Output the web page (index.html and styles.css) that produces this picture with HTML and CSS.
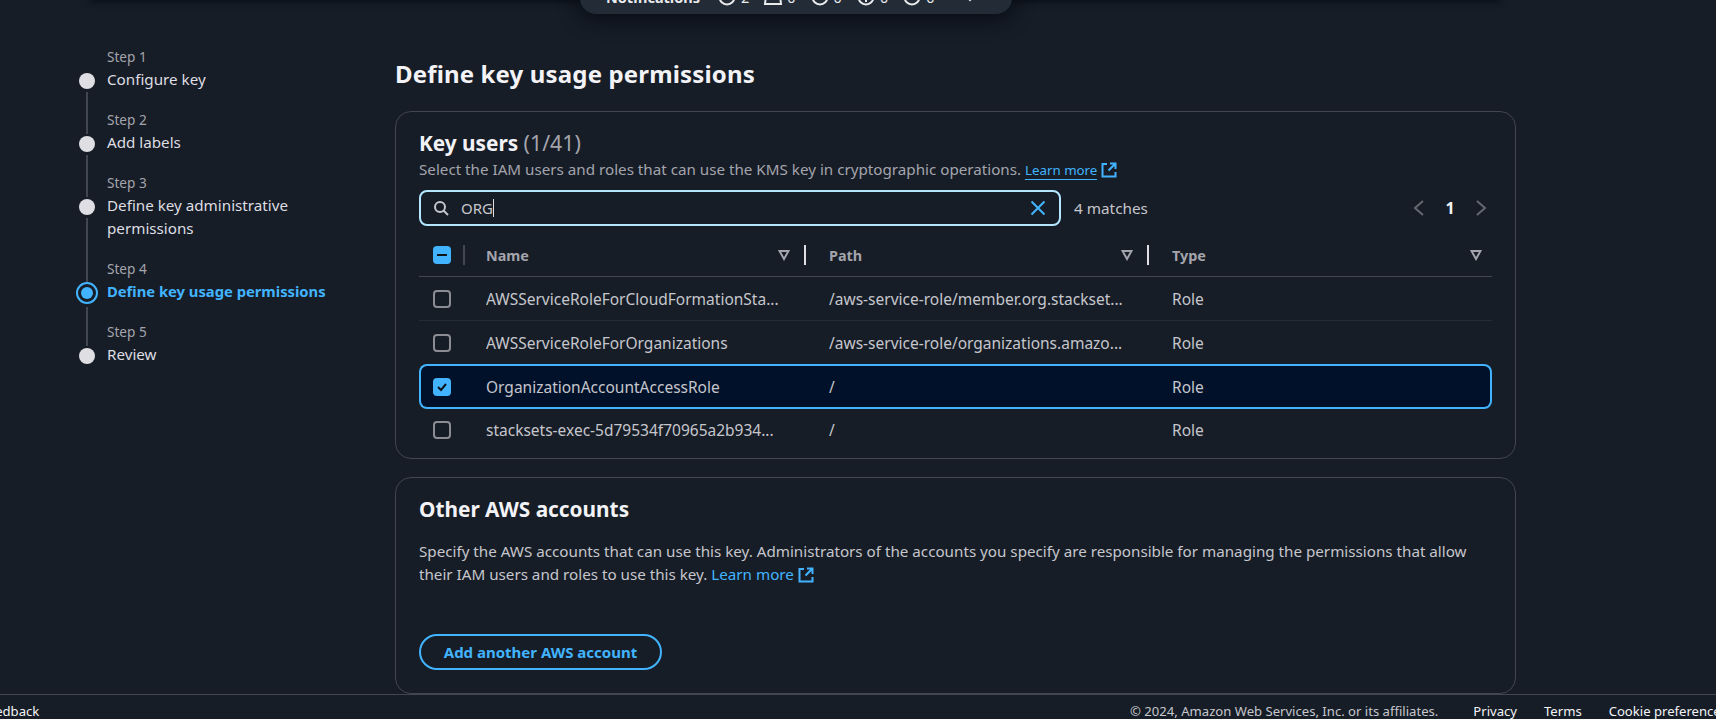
FILE: index.html
```html
<!DOCTYPE html>
<html lang="en">
<head>
    <meta charset="UTF-8">
    <title>Define key usage permissions</title>
    <link rel="stylesheet" href="styles.css">
</head>
<body>

    <!-- Shadow of the console header, scrolled off the top -->
    <div class="top-shadow"></div>

    <!-- Flash bar notifications, mostly cut off -->
    <div class="notify">
        <span class="notify-title">Notifications</span>
        <span class="notify-item"><svg width="20" height="20" viewBox="0 0 20 20"><circle cx="10" cy="10" r="7.5" fill="none" stroke="#e9ebed" stroke-width="2"/></svg>2</span>
        <span class="notify-item"><svg width="20" height="20" viewBox="0 0 20 20"><path d="M4 0 2 17H18L16 0" fill="none" stroke="#e9ebed" stroke-width="2"/></svg>0</span>
        <span class="notify-item"><svg width="20" height="20" viewBox="0 0 20 20"><circle cx="10" cy="10" r="7.5" fill="none" stroke="#e9ebed" stroke-width="2"/></svg>0</span>
        <span class="notify-item"><svg width="20" height="20" viewBox="0 0 20 20"><circle cx="10" cy="10" r="7.5" fill="none" stroke="#e9ebed" stroke-width="2"/><path d="M10 9v6" stroke="#e9ebed" stroke-width="2"/></svg>0</span>
        <span class="notify-item"><svg width="20" height="20" viewBox="0 0 20 20"><circle cx="10" cy="10" r="7.5" fill="none" stroke="#e9ebed" stroke-width="2"/></svg>0</span>
        <svg class="notify-caret" width="16" height="16" viewBox="0 0 16 16"><path d="M2 5l6 6 6-6" fill="none" stroke="#e9ebed" stroke-width="2"/></svg>
    </div>

    <div class="page">

        <!-- Wizard steps -->
        <ul class="steps">
            <li class="step">
                <span class="step-num">Step 1</span>
                <span class="step-name">Configure key</span>
            </li>
            <li class="step">
                <span class="step-num">Step 2</span>
                <span class="step-name">Add labels</span>
            </li>
            <li class="step">
                <span class="step-num">Step 3</span>
                <span class="step-name">Define key administrative permissions</span>
            </li>
            <li class="step step-active">
                <span class="step-num">Step 4</span>
                <span class="step-name">Define key usage permissions</span>
            </li>
            <li class="step">
                <span class="step-num">Step 5</span>
                <span class="step-name">Review</span>
            </li>
        </ul>

        <!-- Main content -->
        <main class="content">
            <h1>Define key usage permissions</h1>

            <section class="card card-users">
                <h2>Key users <span class="count">(1/41)</span></h2>
                <p class="card-desc">Select the IAM users and roles that can use the KMS key in cryptographic operations. <a href="#" class="learn learn-line">Learn more</a>
                    <svg class="ext" width="16" height="16" viewBox="0 0 16 16"><path d="M6 2H1.5v12.5h13V10M9 1.5h5.5V7M14 2 7.5 8.5" fill="none" stroke="#42b4ff" stroke-width="2"/></svg>
                </p>

                <div class="filter-row">
                    <div class="search">
                        <svg width="16" height="16" viewBox="0 0 16 16"><circle cx="7" cy="7" r="5" fill="none" stroke="#c6c6cd" stroke-width="2"/><path d="M10.5 10.5 15 15" stroke="#c6c6cd" stroke-width="2"/></svg>
                        <span class="search-text">ORG</span><span class="caret"></span>
                        <svg class="search-clear" width="16" height="16" viewBox="0 0 16 16"><path d="M1.5 1.5l13 13M14.5 1.5l-13 13" stroke="#42b4ff" stroke-width="2"/></svg>
                    </div>
                    <span class="matches">4 matches</span>
                    <div class="pager">
                        <svg width="16" height="16" viewBox="0 0 16 16"><path d="M12 1 4 8l8 7" fill="none" stroke="#656871" stroke-width="2"/></svg>
                        <span class="page-no">1</span>
                        <svg width="16" height="16" viewBox="0 0 16 16"><path d="m4 1 8 7-8 7" fill="none" stroke="#656871" stroke-width="2"/></svg>
                    </div>
                </div>

                <table class="users">
                    <thead>
                        <tr>
                            <th class="col-check">
                                <div class="th-in"><span class="box box-on"><i class="minus"></i></span><span class="th-line th-line-dim"></span></div>
                            </th>
                            <th class="col-name">
                                <div class="th-in">Name<svg class="sort" width="12" height="12" viewBox="0 0 12 12"><path d="M1.5 2h9L6 10Z" fill="none" stroke="#a4a4ad" stroke-width="2"/></svg><span class="th-line"></span></div>
                            </th>
                            <th class="col-path">
                                <div class="th-in">Path<svg class="sort" width="12" height="12" viewBox="0 0 12 12"><path d="M1.5 2h9L6 10Z" fill="none" stroke="#a4a4ad" stroke-width="2"/></svg><span class="th-line"></span></div>
                            </th>
                            <th class="col-type">
                                <div class="th-in">Type<svg class="sort" width="12" height="12" viewBox="0 0 12 12"><path d="M1.5 2h9L6 10Z" fill="none" stroke="#a4a4ad" stroke-width="2"/></svg></div>
                            </th>
                        </tr>
                    </thead>
                    <tbody>
                        <tr>
                            <td class="col-check"><span class="box"></span></td>
                            <td>AWSServiceRoleForCloudFormationSta...</td>
                            <td>/aws-service-role/member.org.stackset...</td>
                            <td>Role</td>
                        </tr>
                        <tr>
                            <td class="col-check"><span class="box"></span></td>
                            <td>AWSServiceRoleForOrganizations</td>
                            <td>/aws-service-role/organizations.amazo...</td>
                            <td>Role</td>
                        </tr>
                        <tr class="selected">
                            <td class="col-check"><span class="box box-on"><svg width="14" height="14" viewBox="0 0 14 14"><path d="m3 7 3 3 5-6" fill="none" stroke="#0f141a" stroke-width="2"/></svg></span></td>
                            <td>OrganizationAccountAccessRole</td>
                            <td>/</td>
                            <td>Role</td>
                        </tr>
                        <tr>
                            <td class="col-check"><span class="box"></span></td>
                            <td>stacksets-exec-5d79534f70965a2b934...</td>
                            <td>/</td>
                            <td>Role</td>
                        </tr>
                    </tbody>
                </table>
            </section>

            <section class="card card-other">
                <h2>Other AWS accounts</h2>
                <p class="other-desc">Specify the AWS accounts that can use this key. Administrators of the accounts you specify are responsible for managing the permissions that allow their IAM users and roles to use this key. <a href="#" class="learn">Learn more</a>
                    <svg class="ext" width="16" height="16" viewBox="0 0 16 16"><path d="M6 2H1.5v12.5h13V10M9 1.5h5.5V7M14 2 7.5 8.5" fill="none" stroke="#42b4ff" stroke-width="2"/></svg>
                </p>
                <button class="add-btn">Add another AWS account</button>
            </section>
        </main>
    </div>

    <!-- Footer -->
    <footer>
        <span class="feedback">Feedback</span>
        <span class="copy">© 2024, Amazon Web Services, Inc. or its affiliates.</span>
        <a href="#">Privacy</a>
        <a href="#">Terms</a>
        <a href="#">Cookie preferences</a>
    </footer>

</body>
</html>
```

FILE: styles.css
```css
/* General Body Style */
html, body {
    height: 100%;
}

body {
    margin: 0;
    position: relative;
    display: flex;
    flex-direction: column;
    height: 719px;
    overflow: hidden;
    background-color: #161d26;
    color: #dedee3;
    font-family: "Noto Sans", "Open Sans", sans-serif;
    font-size: 15px;
}

/* Top shadow and notification bar */
.top-shadow {
    position: absolute;
    top: -10px;
    left: 90px;
    width: 1410px;
    height: 10px;
    box-shadow: 0 2px 6px #0a0f18;
}

.notify {
    position: absolute;
    top: -16px;
    left: 580px;
    width: 432px;
    height: 30px;
    box-sizing: border-box;
    padding: 0 28px 4px 26px;
    display: flex;
    align-items: center;
    background-color: #232b37;
    border-radius: 0 0 16px 16px;
    box-shadow: 0 4px 20px #070b14;
    color: #e9ebed;
    font-size: 14.5px;
    font-weight: 700;
}

.notify-title {
    margin-right: 17px;
}

.notify-item {
    display: flex;
    align-items: center;
    gap: 4px;
    margin-right: 14px;
    font-weight: 400;
}

.notify-caret {
    margin-left: 14px;
}

/* Page layout */
.page {
    flex: 1;
    min-height: 0;
    display: flex;
    padding-left: 78.5px;
}

/* Wizard steps */
.steps {
    list-style: none;
    margin: 0;
    padding: 47px 0 0;
    width: 316.5px;
    flex-shrink: 0;
}

.step {
    position: relative;
    padding: 0 0 0 28.5px;
    margin-bottom: 19px;
    width: 220px;
}

.step::before {
    content: "";
    position: absolute;
    left: 0;
    top: 26px;
    width: 16px;
    height: 16px;
    border-radius: 50%;
    background-color: #dedee3;
}

.step::after {
    content: "";
    position: absolute;
    left: 7.5px;
    top: 45px;
    bottom: -43px;
    width: 2px;
    background-color: #424650;
}

.step:last-child::after {
    display: none;
}

.step-num {
    display: block;
    margin-bottom: 1px;
    color: #a4a4ad;
    font-size: 13.6px;
    line-height: 20px;
}

.step-name {
    display: block;
    color: #dedee3;
    font-size: 15.2px;
    line-height: 23px;
}

.step-active .step-name {
    color: #42b4ff;
    font-size: 14.75px;
    font-weight: 700;
    white-space: nowrap;
}

.step-active::before {
    left: -3px;
    top: 23px;
    width: 12px;
    height: 12px;
    border: 2px solid #42b4ff;
    background-color: #42b4ff;
    background-clip: content-box;
    padding: 3px;
}

.step-active::after {
    top: 48px;
}

/* Main content */
.content {
    width: 1121px;
}

h1 {
    margin: 0;
    padding-top: 57px;
    height: 54px;
    box-sizing: content-box;
    color: #f3f3f7;
    font-size: 24px;
    line-height: 34px;
    font-weight: 700;
    letter-spacing: 0.15px;
}

.card {
    box-sizing: border-box;
    padding: 0 23px;
    background-color: #161d26;
    border: 1px solid #424650;
    border-radius: 16px;
}

.card h2 {
    margin: 0;
    color: #f3f3f7;
    font-size: 20.8px;
    line-height: 28px;
    font-weight: 700;
}

.card-users {
    height: 348px;
    padding-top: 17px;
    margin-bottom: 18px;
}

.count {
    color: #a4a4ad;
    font-size: 21.3px;
    font-weight: 400;
}

.card-desc {
    margin: 2px 0 0;
    color: #a4a4ad;
    font-size: 15.2px;
    line-height: 21px;
    white-space: nowrap;
}

.learn {
    color: #42b4ff;
    text-decoration: none;
}

.learn-line {
    font-size: 13.3px;
    border-bottom: 1px solid #42b4ff;
}

.ext {
    vertical-align: -3px;
}

/* Search row */
.filter-row {
    display: flex;
    align-items: center;
    margin-top: 9px;
    height: 36px;
}

.search {
    box-sizing: border-box;
    width: 642px;
    height: 36px;
    display: flex;
    align-items: center;
    padding: 0 13px 0 12px;
    border: 2px solid #b3e7ff;
    border-radius: 8px;
}

.search-text {
    margin-left: 12px;
    color: #c6c6cd;
}

.caret {
    width: 1px;
    height: 18px;
    background-color: #dedee3;
}

.search-clear {
    margin-left: auto;
}

.matches {
    margin-left: 13px;
    color: #c6c6cd;
    font-size: 15.3px;
}

.pager {
    margin-left: auto;
    margin-right: 3px;
    display: flex;
    align-items: center;
    gap: 16px;
}

.page-no {
    width: 14px;
    text-align: center;
    color: #f3f3f7;
    font-size: 16px;
    font-weight: 700;
}

/* Table */
.users {
    width: 1073px;
    margin-top: 8px;
    border-collapse: separate;
    border-spacing: 0;
    table-layout: fixed;
    font-size: 15.5px;
}

.users th {
    height: 42px;
    padding: 0;
    text-align: left;
    color: #a4a4ad;
    font-size: 14.4px;
    font-weight: 700;
    border-bottom: 1px solid #424650;
}

.col-check { width: 67px; }
.col-name { width: 343px; }
.col-path { width: 343px; }

.th-in {
    display: flex;
    align-items: center;
    height: 100%;
}

.col-check .th-in {
    padding-left: 14px;
}

.sort {
    margin-left: auto;
}

.col-name .sort,
.col-path .sort {
    margin-right: 14px;
}

.col-type .sort {
    margin-right: 10px;
}

.th-line {
    width: 2px;
    height: 20px;
    background-color: #dedee3;
    margin-right: 23px;
}

.th-line-dim {
    background-color: #424650;
    margin: 0 0 0 12px;
}

.users td {
    height: 43px;
    padding: 0;
    color: #c6c6cd;
    border-bottom: 1px solid #232b37;
    white-space: nowrap;
    overflow: hidden;
}

.users td.col-check {
    padding-left: 14px;
    box-sizing: border-box;
}

.users tr:nth-child(2) td,
.users tr:nth-child(3) td,
.users tr:last-child td {
    border-bottom: 0;
}

.users tr:last-child td {
    height: 42px;
}

.users tr.selected td {
    height: 41px;
    background-color: #001129;
    border-top: 2px solid #42b4ff;
    border-bottom: 2px solid #42b4ff;
}

.users tr.selected td:first-child {
    border-left: 2px solid #42b4ff;
    border-radius: 8px 0 0 8px;
    padding-left: 12px;
}

.users tr.selected td:last-child {
    border-right: 2px solid #42b4ff;
    border-radius: 0 8px 8px 0;
}

.box {
    box-sizing: border-box;
    display: flex;
    align-items: center;
    justify-content: center;
    width: 18px;
    height: 18px;
    border: 2px solid #8c8c94;
    border-radius: 4px;
}

.box-on {
    border: 0;
    background-color: #42b4ff;
}

.minus {
    width: 10px;
    height: 2px;
    background-color: #0f141a;
}

/* Other AWS accounts */
.card-other {
    height: 217px;
    padding-top: 17px;
}

.other-desc {
    margin: 17px 0 0;
    width: 1060px;
    color: #c6c6cd;
    font-size: 15.2px;
    line-height: 22.5px;
}

.add-btn {
    display: block;
    margin-top: 49px;
    box-sizing: border-box;
    width: 243px;
    height: 36px;
    padding: 0;
    background: none;
    border: 2px solid #42b4ff;
    border-radius: 18px;
    color: #42b4ff;
    font-family: inherit;
    font-size: 15px;
    font-weight: 700;
}

/* Footer Style */
footer {
    flex-shrink: 0;
    box-sizing: border-box;
    height: 25px;
    display: flex;
    align-items: center;
    padding-top: 8px;
    border-top: 1px solid #424650;
    font-size: 13.1px;
    white-space: nowrap;
    overflow: hidden;
}

footer a {
    color: #f3f3f7;
    text-decoration: none;
    margin-left: 27px;
}

.feedback {
    margin-left: -19px;
    color: #f3f3f7;
}

.copy {
    margin-left: auto;
    margin-right: 8px;
    color: #c6c6cd;
}

footer a:last-child {
    margin-right: -11px;
}
```
